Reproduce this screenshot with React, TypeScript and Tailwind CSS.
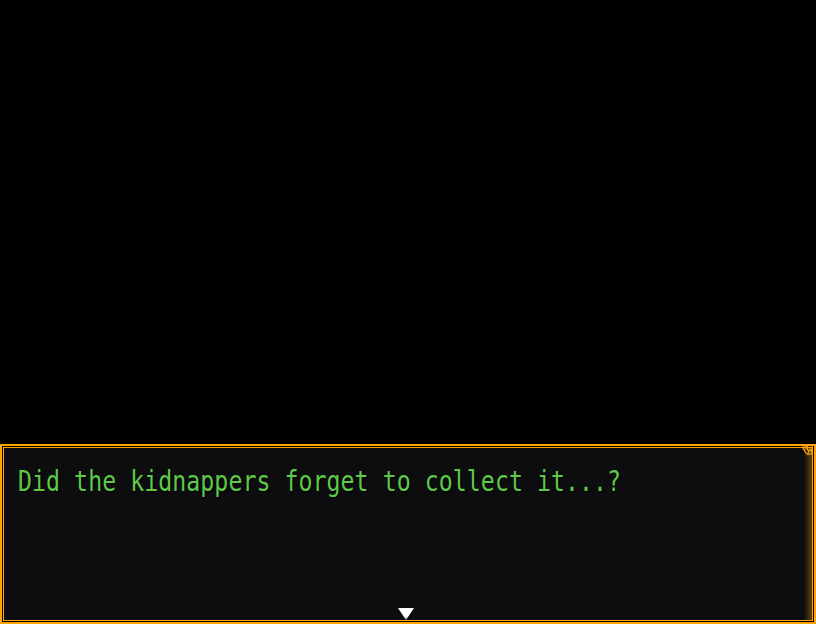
import React from "react";

export default function App() {
  return (
    <div className="w-[816px] h-[624px] bg-black flex flex-col overflow-hidden">
      <div className="flex-1" />
      <div className="relative h-[180px] border-2 border-[#ffa300] bg-black p-px">
        <div className="relative h-full border border-[#ffa300] bg-[#0d0d10] pl-[14px] pt-[17px]">
          <p
            className="inline-block origin-top-left scale-y-[1.19] text-[23.3px] text-[#5fc94a] whitespace-pre leading-[27px]"
            style={{ fontFamily: '"DejaVu Sans Mono", monospace', textShadow: "1px 1px 1px #000" }}
          >
            Did the kidnappers forget to collect it...?
          </p>
          <div className="absolute top-0 bottom-0 right-0 w-[8px] bg-gradient-to-r from-transparent to-[#a0620099]" />
          <div className="absolute bottom-0 left-[394px] flex">
            <svg width="16" height="12" viewBox="0 0 16 12">
              <defs>
                <linearGradient id="tri" x1="0" y1="0" x2="0" y2="1">
                  <stop offset="0.7" stopColor="#ffffff" />
                  <stop offset="1" stopColor="#8a8a8a" />
                </linearGradient>
              </defs>
              <polygon points="0,0 16,0 8,12" fill="url(#tri)" />
            </svg>
          </div>
        </div>
        <div className="absolute top-[-2px] right-[-2px] flex">
          <svg width="16" height="16" viewBox="0 0 16 16" fill="none" stroke="#ffa300" strokeWidth="1.2">
            <circle cx="4.5" cy="3.5" r="1.8" />
            <path d="M3.5 5 L6 9 L8.5 11" />
            <rect x="7.5" y="1.5" width="4.5" height="4.5" />
            <rect x="9" y="3" width="1.5" height="1.5" fill="#ffa300" stroke="none" />
            <circle cx="10" cy="8.5" r="1.8" />
          </svg>
        </div>
      </div>
    </div>
  );
}
